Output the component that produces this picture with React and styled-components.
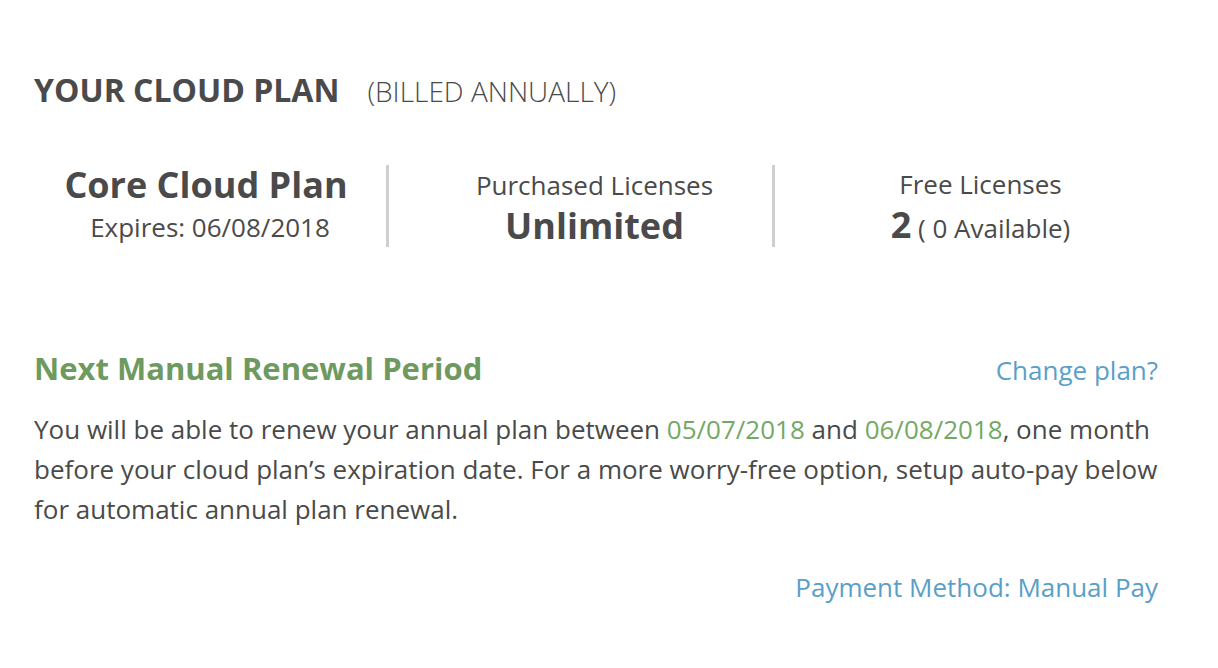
import React from 'react';
import styled, { createGlobalStyle } from 'styled-components';

const GlobalStyle = createGlobalStyle`
  html, body {
    margin: 0;
    padding: 0;
    background: #ffffff;
  }
  body {
    font-family: 'Open Sans', 'Noto Sans', sans-serif;
    color: #4a4a4a;
  }
`;

const Page = styled.div`
  width: 1218px;
  height: 668px;
  box-sizing: border-box;
  padding: 68px 60px 0 34px;
`;

const TitleRow = styled.div`
  display: flex;
  align-items: baseline;
  gap: 28px;
`;

const Title = styled.h1`
  margin: 0;
  font-size: 32px;
  font-weight: 700;
  color: #4a4a4a;
  line-height: 44px;
`;

const Billing = styled.span`
  font-size: 28px;
  font-weight: 300;
  color: #4a4a4a;
`;

const Stats = styled.div`
  display: grid;
  grid-template-columns: 352px 386px 386px;
  margin-top: 53px;
`;

const Stat = styled.div`
  box-sizing: border-box;
  display: flex;
  flex-direction: column;
  align-items: center;
  justify-content: center;
  height: 82px;
  padding-top: ${p => (p.first ? '0' : '4px')};
  padding-bottom: ${p => (p.first ? '4px' : '0')};
  padding-left: ${p => (p.first ? '0' : '28px')};
  border-left: ${p => (p.first ? 'none' : '3px solid #cfcfcf')};
`;

const PlanName = styled.div`
  font-size: 36px;
  font-weight: 700;
  line-height: 42px;
  margin-left: -8px;
  margin-bottom: 3px;
`;

const Label = styled.div`
  font-size: 26px;
  font-weight: 400;
  line-height: 36px;
`;

const Amount = styled.div`
  font-size: 26px;
  line-height: 46px;
`;

const Big = styled.span`
  font-size: 36px;
  font-weight: 700;
  line-height: 46px;
`;

const Small = styled.span`
  font-size: 26px;
  font-weight: 400;
`;

const SectionHead = styled.div`
  display: flex;
  justify-content: space-between;
  align-items: baseline;
  margin-top: 99px;
`;

const SectionTitle = styled.h2`
  margin: 0;
  font-size: 31px;
  font-weight: 700;
  color: #6e9a5f;
  line-height: 44px;
`;

const Link = styled.a`
  font-size: 26px;
  color: #5a9fc8;
  text-decoration: none;
  cursor: pointer;
`;

const Body = styled.p`
  margin: 19px 0 0;
  font-size: 26px;
  line-height: 40px;
  color: #4a4a4a;
`;

const Date = styled.span`
  color: #74a865;
`;

const Footer = styled.div`
  display: flex;
  justify-content: flex-end;
  margin-top: 40px;
`;

export default function App() {
  return (
    <>
      <GlobalStyle />
      <Page>
        <TitleRow>
          <Title>YOUR CLOUD PLAN</Title>
          <Billing>(BILLED ANNUALLY)</Billing>
        </TitleRow>

        <Stats>
          <Stat first>
            <PlanName>Core Cloud Plan</PlanName>
            <Label>Expires: 06/08/2018</Label>
          </Stat>
          <Stat>
            <Label>Purchased Licenses</Label>
            <Big>Unlimited</Big>
          </Stat>
          <Stat>
            <Label>Free Licenses</Label>
            <Amount>
              <Big>2</Big> <Small>( 0 Available)</Small>
            </Amount>
          </Stat>
        </Stats>

        <SectionHead>
          <SectionTitle>Next Manual Renewal Period</SectionTitle>
          <Link>Change plan?</Link>
        </SectionHead>

        <Body>
          You will be able to renew your annual plan between <Date>05/07/2018</Date> and{' '}
          <Date>06/08/2018</Date>, one month before your cloud plan’s expiration date. For a
          more worry-free option, setup auto-pay below for automatic annual plan renewal.
        </Body>

        <Footer>
          <Link>Payment Method: Manual Pay</Link>
        </Footer>
      </Page>
    </>
  );
}
